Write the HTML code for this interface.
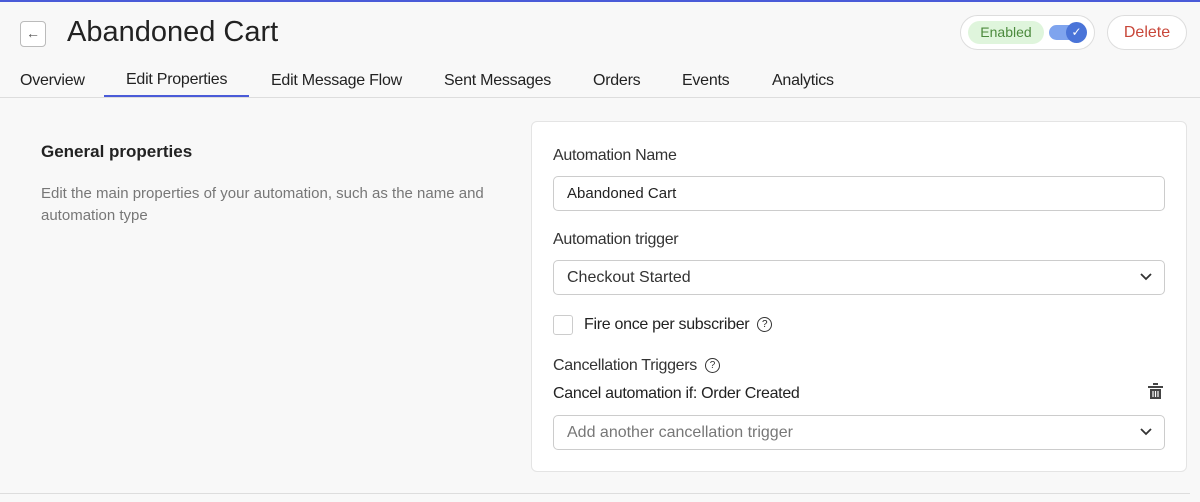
<!DOCTYPE html>
<html><head><style>
*{box-sizing:border-box;margin:0;padding:0}
body{width:1200px;height:502px;background:#f8f8f8;font-family:"Liberation Sans",sans-serif;color:#222;position:relative;overflow:hidden}
.abs{position:absolute}
.tab{position:absolute;top:72px;font-size:16px;color:#222;letter-spacing:-0.25px}
.lbl{position:absolute;left:553px;font-size:16px;color:#333;letter-spacing:-0.3px}
.inp{position:absolute;left:553px;width:612px;height:35px;border:1px solid #ccc;border-radius:5px;background:#fff;font-size:16px;padding:0 13px;line-height:33px;color:#333}
.chev{position:absolute;right:12px;top:12px}
.q{display:inline-block;width:15px;height:15px;border:1.3px solid #333;border-radius:50%;font-size:10px;line-height:13px;text-align:center;vertical-align:middle;margin-left:8px;letter-spacing:0}
</style></head><body>
<div class="abs" style="left:0;top:0;width:1200px;height:2px;background:#4a5bd8"></div>
<div class="abs" style="left:20px;top:21px;width:26px;height:26px;border:1px solid #bbb;border-radius:4px;background:#fff;text-align:center;line-height:23px;font-size:14px;color:#555">←</div>
<div class="abs" style="left:67px;top:16px;font-size:29px;color:#222">Abandoned Cart</div>
<div class="abs" style="left:960px;top:15px;width:135px;height:35px;border:1px solid #ddd;border-radius:18px;background:#fff"></div>
<div class="abs" style="left:968px;top:21px;width:76px;height:23px;border-radius:12px;background:#dff5dc;color:#4c8a3d;font-size:14px;text-align:center;line-height:23px">Enabled</div>
<div class="abs" style="left:1049px;top:25px;width:36px;height:15px;border-radius:8px;background:#7fa4ee"></div>
<div class="abs" style="left:1066px;top:22px;width:21px;height:21px;border-radius:50%;background:#4a74d8;color:#fff;font-size:12px;text-align:center;line-height:21px">✓</div>
<div class="abs" style="left:1107px;top:15px;width:80px;height:35px;border:1px solid #ddd;border-radius:18px;background:#fff;color:#c8473a;font-size:16px;text-align:center;line-height:33px">Delete</div>
<div class="tab" style="left:20px">Overview</div>
<div class="tab" style="left:126px;top:71px">Edit Properties</div>
<div class="abs" style="left:104px;top:95px;width:145px;height:2px;background:#4a5bd8"></div>
<div class="tab" style="left:271px">Edit Message Flow</div>
<div class="tab" style="left:444px">Sent Messages</div>
<div class="tab" style="left:593px">Orders</div>
<div class="tab" style="left:682px">Events</div>
<div class="tab" style="left:772px">Analytics</div>
<div class="abs" style="left:0;top:97px;width:1200px;height:1px;background:#ddd"></div>
<div class="abs" style="left:41px;top:142px;font-size:17px;font-weight:bold;color:#222">General properties</div>
<div class="abs" style="left:41px;top:183px;width:470px;font-size:15px;line-height:22px;color:#777">Edit the main properties of your automation, such as the name and automation type</div>
<div class="abs" style="left:531px;top:121px;width:656px;height:351px;background:#fff;border:1px solid #e4e4e4;border-radius:6px"></div>
<div class="lbl" style="top:147px">Automation Name</div>
<div class="inp" style="top:176px;color:#222;font-size:15px">Abandoned Cart</div>
<div class="lbl" style="top:231px">Automation trigger</div>
<div class="inp" style="top:260px">Checkout Started<svg class="chev" width="12" height="8" viewBox="0 0 12 8"><path d="M1 1l5 5 5-5" fill="none" stroke="#333" stroke-width="1.8"/></svg></div>
<div class="abs" style="left:553px;top:315px;width:20px;height:20px;border:1px solid #ccc;border-radius:3px;background:#fff"></div>
<div class="lbl" style="left:584px;top:316px;color:#222">Fire once per subscriber<span class="q">?</span></div>
<div class="lbl" style="top:357px">Cancellation Triggers<span class="q">?</span></div>
<div class="lbl" style="top:385px;color:#222">Cancel automation if: Order Created</div>
<svg class="abs" style="left:1148px;top:383px" width="15" height="17" viewBox="0 0 15 17"><rect x="5" y="0" width="5" height="2" fill="#444"/><rect x="0" y="3" width="15" height="2" fill="#444"/><path d="M2 6h11v10H2z" fill="#444"/><path d="M5 8v6M7.5 8v6M10 8v6" stroke="#fff" stroke-width="1.2"/></svg>
<div class="inp" style="top:415px;color:#777">Add another cancellation trigger<svg class="chev" width="12" height="8" viewBox="0 0 12 8"><path d="M1 1l5 5 5-5" fill="none" stroke="#333" stroke-width="1.8"/></svg></div>
<div class="abs" style="left:0;top:493px;width:1190px;height:1px;background:#ddd"></div>
</body></html>
